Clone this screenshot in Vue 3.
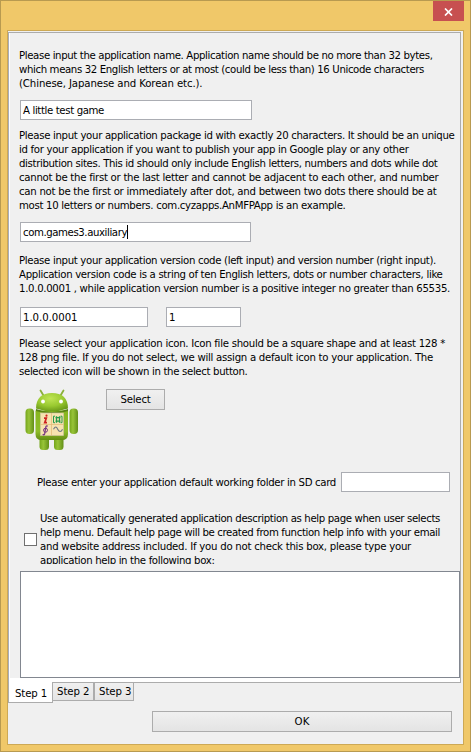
<script setup>
import { onMounted, ref } from 'vue'

const namePara = [
  ['Please input the application name. Application name should be no more than 32 bytes,', 413.5],
  ['which means 32 English letters or at most (could be less than) 16 Unicode characters', 405],
  ['(Chinese, Japanese and Korean etc.).', 183.5],
]
const packagePara = [
  ['Please input your application package id with exactly 20 characters. It should be an unique', 435.5],
  ['id for your application if you want to publish your app in Google play or any other', 389.5],
  ['distribution sites. This id should only include English letters, numbers and dots while dot', 418.5],
  ['cannot be the first or the last letter and cannot be adjacent to each other, and number', 419.5],
  ['can not be the first or immediately after dot, and between two dots there should be at', 417.5],
  ['most 10 letters or numbers. com.cyzapps.AnMFPApp is an example.', 326.5],
]
const versionPara = [
  ['Please input your application version code (left input) and version number (right input).', 417],
  ['Application version code is a string of ten English letters, dots or number characters, like', 423.5],
  ['1.0.0.0001 , while application version number is a positive integer no greater than 65535.', 431],
]
const iconPara = [
  ['Please select your application icon. Icon file should be a square shape and at least 128 *', 426],
  ['128 png file. If you do not select, we will assign a default icon to your application. The', 414],
  ['selected icon will be shown in the select button.', 228.5],
]
const helpPara = [
  ['Use automatically generated application description as help page when user selects', 400],
  ['help menu. Default help page will be created from function help info with your email', 400],
  ['and website address included. If you do not check this box, please type your', 371],
  ['application help in the following box:', 174.5],
]
const tabs = [['Step 1', 32], ['Step 2', 32.5], ['Step 3', 32.5]]

const root = ref(null)
const fit = (el) => {
  const natural = el.getBoundingClientRect().width
  const gaps = el.textContent.length
  el.style.letterSpacing = (Number(el.dataset.w) - natural) / gaps + 'px'
}
onMounted(() => root.value.querySelectorAll('[data-w]').forEach(fit))
</script>

<template>
  <div ref="root" class="window">
    <header class="titlebar">
      <button class="close" aria-label="Close">
        <svg width="9" height="8" viewBox="0 0 9 8"><path d="M1 .5 8 7.5M8 .5 1 7.5" stroke="#fff" stroke-width="1.7" /></svg>
      </button>
    </header>
    <main class="client">
      <section class="panel">
        <div class="page">
          <div class="para"><div v-for="l in namePara" :key="l[0]"><span :data-w="l[1]">{{ l[0] }}</span></div></div>
          <div class="input name"><span data-w="81">A little test game</span></div>
          <div class="para pkg-text"><div v-for="l in packagePara" :key="l[0]"><span :data-w="l[1]">{{ l[0] }}</span></div></div>
          <div class="input pkg"><span data-w="104">com.games3.auxiliary</span><i class="caret"></i></div>
          <div class="para ver-text"><div v-for="l in versionPara" :key="l[0]"><span :data-w="l[1]">{{ l[0] }}</span></div></div>
          <div class="versions">
            <div class="input code"><span data-w="54.5">1.0.0.0001</span></div>
            <div class="input number"><span>1</span></div>
          </div>
          <div class="para icon-text"><div v-for="l in iconPara" :key="l[0]"><span :data-w="l[1]">{{ l[0] }}</span></div></div>
          <div class="icon-row">
            <svg class="robot" width="54" height="63" viewBox="0 0 54 63">
              <defs>
                <linearGradient id="limb" x1="0" x2="1" y1="0" y2="0">
                  <stop offset="0" stop-color="#75a51c" /><stop offset=".4" stop-color="#98c438" /><stop offset="1" stop-color="#638f18" />
                </linearGradient>
                <linearGradient id="body" x1="0" x2="0" y1="0" y2="1">
                  <stop offset="0" stop-color="#87b51f" /><stop offset=".7" stop-color="#8fbd2a" /><stop offset="1" stop-color="#638c14" />
                </linearGradient>
                <radialGradient id="head" cx=".45" cy=".3" r=".75">
                  <stop offset="0" stop-color="#bfe454" /><stop offset=".55" stop-color="#99c930" /><stop offset="1" stop-color="#679617" />
                </radialGradient>
              </defs>
              <path d="M15.500 1.500 18.500 6.500M38.500 1.500 35.500 6.500" stroke="#8bb13a" stroke-width="1.800" stroke-linecap="round" />
              <rect x="14.500" y="44" width="9.500" height="17" rx="3.500" fill="url(#limb)" />
              <rect x="29" y="44" width="9.500" height="17" rx="3.500" fill="url(#limb)" />
              <rect x=".5" y="19.500" width="8.500" height="25.500" rx="4" fill="url(#limb)" />
              <rect x="44.500" y="19.500" width="8.500" height="25.500" rx="4" fill="url(#limb)" />
              <path d="M10.500 21.500H43V45Q43 51 37 51H16.500Q10.500 51 10.500 45Z" fill="url(#body)" />
              <path d="M11 20Q27 26 43 20V22Q27 27 11 22Z" fill="#5a8314" />
              <path d="M11 19.500C11 9 17 4 27 4S43 9 43 19.500Q27 25 11 19.500Z" fill="url(#head)" />
              <circle cx="18" cy="12.500" r="1.900" fill="#fff" /><circle cx="36" cy="12.500" r="1.900" fill="#fff" />
              <rect x="15.500" y="24" width="23" height="22.500" fill="#f6e3b0" stroke="#cfc5a0" stroke-width=".7" />
              <path d="M26.500 24V46.500M15.500 35.500H38.500" stroke="#e2b875" stroke-width=".7" />
              <g fill="none" transform="translate(-.5 -1.300)">
                <path d="M19.500 30.500H21.800L20.200 35H22.500" stroke="#cf2020" stroke-width="1.700" /><circle cx="22" cy="28" r="1.100" fill="#cf2020" />
                <path d="M30.500 28.500H29V35H30.500M36 28.500H37.500V35H36" stroke="#279a4b" stroke-width="1" />
                <path d="M31 30H36M31 33.500H36M32 28.500V35M35 28.500V35" stroke="#279a4b" stroke-width="1.300" />
                <path d="M23.300 38.500Q21.500 37.500 21.200 40L20.200 46Q19.500 48 18.300 46.500" stroke="#793684" stroke-width="1.300" />
                <circle cx="21" cy="42.500" r="2" stroke="#793684" stroke-width="1" />
                <path d="M29 41.500C31.500 37.500 32.500 40 33.500 42S36.500 45 38 41.500" stroke="#6c7783" stroke-width="1.100" />
              </g>
            </svg>
            <button class="button select"><span data-w="30">Select</span></button>
          </div>
          <div class="folder">
            <span data-w="299">Please enter your application default working folder in SD card</span>
            <div class="input dir"></div>
          </div>
          <div class="help">
            <span class="check"></span>
            <div class="para help-text"><div v-for="l in helpPara" :key="l[0]"><span :data-w="l[1]">{{ l[0] }}</span></div></div>
          </div>
          <div class="area"></div>
        </div>
      </section>
      <nav class="tabs">
        <div v-for="(t, i) in tabs" :key="t[0]" class="tab" :class="{ active: i === 0 }"><span :data-w="t[1]">{{ t[0] }}</span></div>
      </nav>
      <button class="button ok"><span data-w="15">OK</span></button>
    </main>
  </div>
</template>

<style>
body { margin: 0; }
</style>

<style scoped>
* { box-sizing: border-box; }
.window {
  width: 471px; height: 752px; padding: 0 6px 6px;
  background: #f0c869; border: 1px solid #b89a50;
  font: 11.3px/14px "DejaVu Sans Condensed", "DejaVu Sans", sans-serif;
  font-stretch: condensed;
  color: #000; white-space: nowrap; overflow: hidden;
}
.titlebar { height: 29px; display: flex; justify-content: flex-end; }
.close {
  width: 31px; height: 20px; padding: 2px 0 0; border: 0; background: #c75050;
  display: flex; align-items: center; justify-content: center;
}
.client { height: 715px; width: 457px; border: 1px solid #cda955; background: #f0f0f0; }
.panel {
  width: 453px; height: 651px; margin-top: 1px;
  border: 1px solid #acacac; border-left-color: #a9adb8; padding: 0 0 4px 1px; background: #fff;
}
.page { background: #f0f0f0; height: 645px; padding: 16px 0 0 9px; }
.para > div { height: 14px; }
.input {
  height: 20px; border: 1px solid #abadb3; background: #fff; padding: 3px 0 0 2px;
  display: flex; align-items: flex-start;
}
.name { width: 232px; margin: 9px 0 0 1px; }
.pkg-text { margin-top: 9px; }
.pkg { width: 231px; margin: 9px 0 0 1px; }
.caret { width: 1px; height: 14px; background: #000; margin-top: -1px; }
.ver-text { margin-top: 12px; }
.versions { display: flex; gap: 18px; margin: 11px 0 0 1px; }
.code { width: 128px; }
.number { width: 75px; }
.icon-text { margin-top: 10px; }
.icon-row { display: flex; margin-top: 10px; height: 83px; padding-left: 6px; }
.button {
  padding: 0; border: 1px solid #acacac; background: linear-gradient(#f0f0f0, #e4e4e4);
  height: 21px; font: inherit; color: #000; text-align: center;
}
.select { width: 59px; margin-left: 27px; }
.folder { display: flex; align-items: center; padding-left: 19px; height: 20px; }
.folder > span { padding-top: 2px; margin-left: -1px; }
.dir { width: 109px; margin-left: 5px; }
.help { display: flex; margin-top: 19px; padding-left: 5px; height: 53px; overflow: hidden; }
.check { width: 13px; height: 13px; border: 1px solid #707070; background: #fff; margin-top: 22px; }
.help-text { margin-left: 3px; padding-top: 1px; }
.area { width: 440px; height: 107px; margin: 7px 0 0 1px; border: 1px solid #828790; background: #fff; }
.tabs { display: flex; height: 20px; }
.tab { height: 18px; border: 1px solid #acacac; border-top: 0; padding: 2px 0 0 4px; background: linear-gradient(#f0f0f0, #e5e5e5); }
.tab.active { width: 45px; height: 21px; margin-top: -1px; padding: 5px 0 0 6px; background: #fff; z-index: 1; }
.tab:nth-child(2) { width: 41px; border-left: 0; }
.tab:nth-child(3) { width: 40px; }
.ok { display: block; width: 300px; margin: 8px 0 0 144px; }
</style>
